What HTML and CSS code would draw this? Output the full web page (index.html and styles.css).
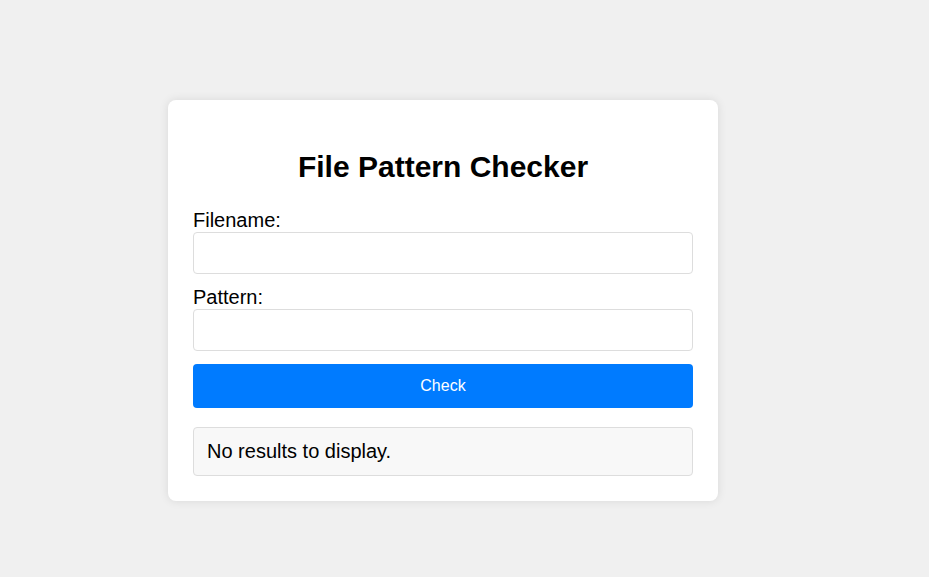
FILE: index.html
```html
<!DOCTYPE html>
<html lang="en">
<head>
<meta charset="utf-8">
<title>File Pattern Checker</title>
<link rel="stylesheet" href="styles.css">
</head>
<body>
<div class="card">
  <h2 class="title">File Pattern Checker</h2>
  <label class="label" for="filename">Filename:</label>
  <input class="field" id="filename" type="text">
  <label class="label" for="pattern">Pattern:</label>
  <input class="field" id="pattern" type="text">
  <button class="btn" type="button">Check</button>
  <div class="result">No results to display.</div>
</div>
</body>
</html>
```
FILE: styles.css
```css
html, body {
  margin: 0;
  padding: 0;
}
body {
  background: #f0f0f0;
  font-family: "Liberation Sans", Arial, sans-serif;
  color: #000;
  min-height: 577px;
  padding-top: 100px;
  padding-left: 168px;
  box-sizing: border-box;
}
.card {
  width: 550px;
  box-sizing: border-box;
  padding: 25px;
  background: #fff;
  border-radius: 8px;
  box-shadow: 0 0 10px rgba(0, 0, 0, 0.1);
}
.title {
  font-size: 30px;
  font-weight: bold;
  text-align: center;
  margin: 25px 0 25px;
  line-height: normal;
}
.label {
  display: block;
  font-size: 20px;
  line-height: 23px;
}
.field {
  display: block;
  width: 100%;
  box-sizing: border-box;
  height: 42px;
  margin: 0 0 12px;
  padding: 10px;
  border: 1px solid #ddd;
  border-radius: 4px;
  font-family: "Liberation Sans", Arial, sans-serif;
  font-size: 16px;
  background: #fff;
}
.btn {
  display: block;
  width: 100%;
  height: 44px;
  margin-top: 13px;
  border: none;
  border-radius: 4px;
  background: #007bff;
  color: #fff;
  font-family: "Liberation Sans", Arial, sans-serif;
  font-size: 16px;
  cursor: pointer;
}
.result {
  margin-top: 19px;
  padding: 12px 13px;
  border: 1px solid #ddd;
  border-radius: 4px;
  background: #f8f8f8;
  font-size: 20px;
  line-height: 23px;
}
```
